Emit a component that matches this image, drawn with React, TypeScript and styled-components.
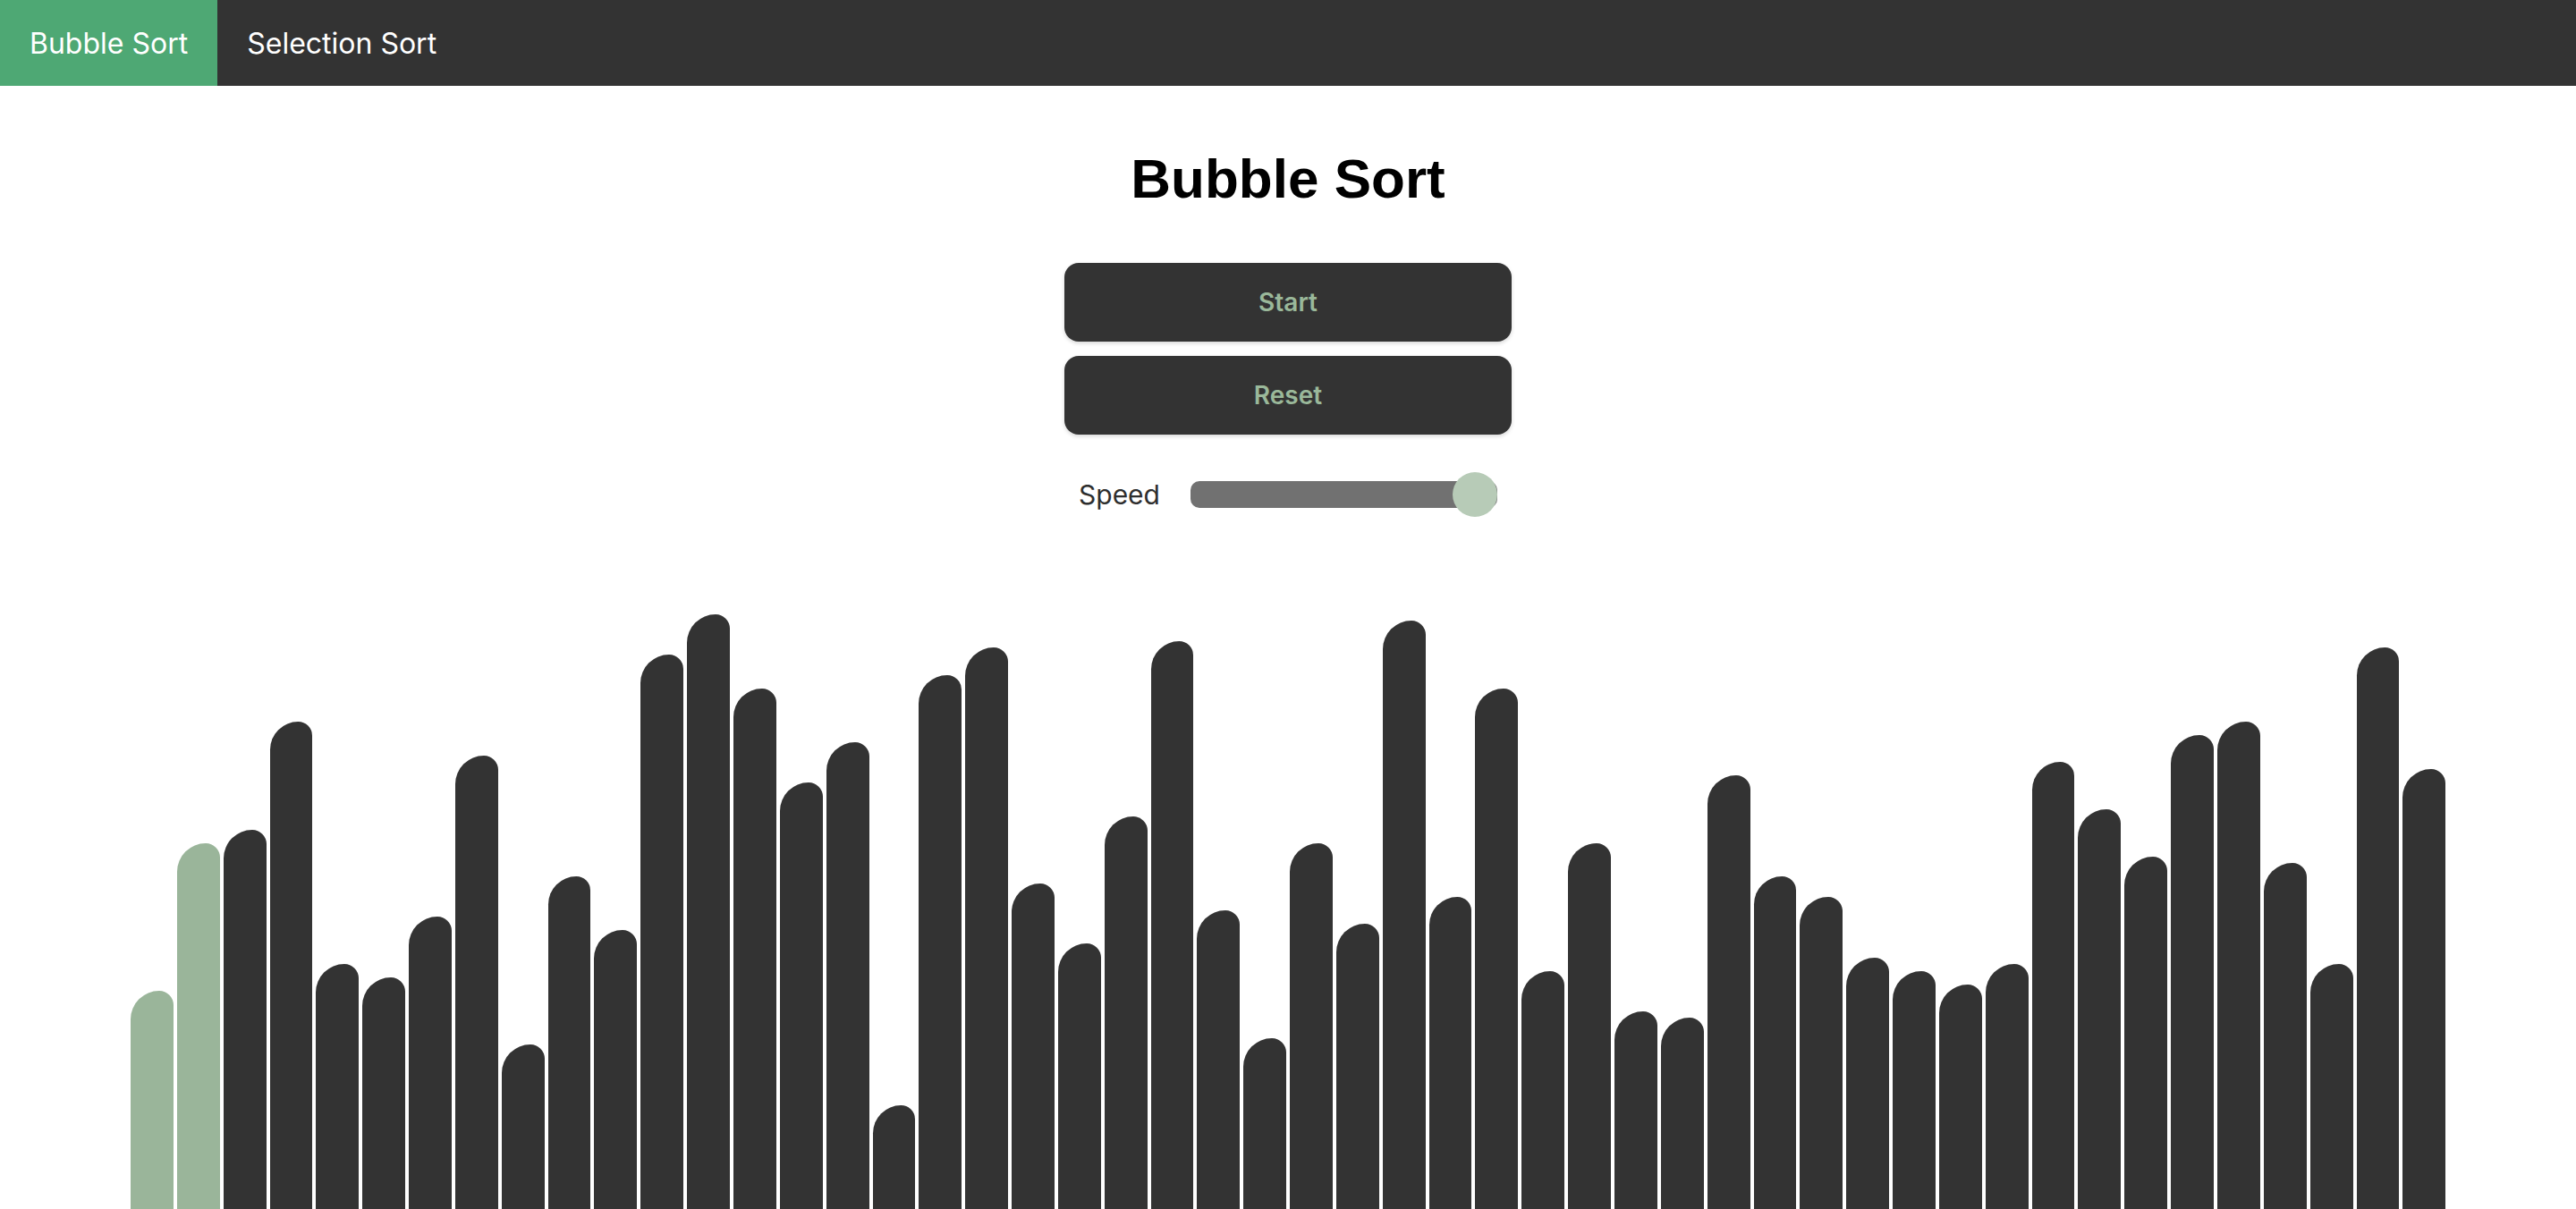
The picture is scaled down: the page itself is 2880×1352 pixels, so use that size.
import React from "react";
import styled, { createGlobalStyle } from "styled-components";

const GlobalStyle = createGlobalStyle`
  html, body {
    margin: 0;
    padding: 0;
    overflow: hidden;
    background: #ffffff;
    font-family: Inter, "Noto Sans", sans-serif;
  }
  * { box-sizing: border-box; }
`;

const Page = styled.div`
  height: 100vh;
  display: flex;
  flex-direction: column;
`;

const NavBar = styled.nav`
  height: 96px;
  flex: none;
  display: flex;
  align-items: stretch;
  background: #333333;
`;

const NavLink = styled.a<{ $active?: boolean }>`
  display: flex;
  align-items: center;
  padding: 0 33px 0 33px;
  font-family: Inter, sans-serif;
  font-size: 32px;
  font-weight: 400;
  color: #ffffff;
  text-decoration: none;
  background: ${(p) => (p.$active ? "#4ea874" : "transparent")};
  cursor: pointer;
`;

const Main = styled.main`
  flex: 1;
  min-height: 0;
  display: flex;
  flex-direction: column;
  align-items: center;
`;

const Title = styled.h1`
  margin: 73px 0 0;
  font-family: "Liberation Sans", Arial, sans-serif;
  font-size: 62px;
  line-height: 1;
  font-weight: 700;
  color: #000000;
`;

const Controls = styled.div`
  margin-top: 63px;
  display: flex;
  flex-direction: column;
  gap: 16px;
`;

const ActionButton = styled.button`
  width: 500px;
  height: 88px;
  border: none;
  border-radius: 16px;
  background: #333333;
  color: #9ab89a;
  font-family: Inter, sans-serif;
  font-size: 28px;
  font-weight: 600;
  box-shadow: 0 2px 4px rgba(0, 0, 0, 0.16);
  cursor: pointer;
`;

const SpeedRow = styled.div`
  margin-top: 42px;
  height: 50px;
  display: flex;
  align-items: center;
  gap: 34px;
`;

const SpeedLabel = styled.span`
  font-family: Inter, sans-serif;
  font-size: 30px;
  color: #2e2e2e;
`;

const Track = styled.div`
  position: relative;
  width: 343px;
  height: 30px;
  border-radius: 10px;
  background: #717171;
`;

const Thumb = styled.div`
  position: absolute;
  right: 0;
  top: 50%;
  width: 50px;
  height: 50px;
  margin-top: -25px;
  border-radius: 50%;
  background: #b7cbb7;
`;

const BarArea = styled.div`
  flex: 1;
  min-height: 0;
  width: 90%;
  display: flex;
  align-items: flex-end;
  overflow: hidden;
`;

const Bar = styled.div<{ $highlight?: boolean }>`
  flex: 1;
  margin: 0 2px;
  border-radius: 40px 20px 0 0;
  background: ${(p) => (p.$highlight ? "#9ab59a" : "#333333")};
`;

const heights = [
  244, 409, 424, 545, 274, 259, 327, 507, 184, 372, 312, 620, 665, 582, 477,
  522, 116, 597, 628, 364, 297, 439, 635, 334, 191, 409, 319, 658, 349, 582,
  266, 409, 221, 214, 485, 372, 349, 281, 266, 251, 274, 500, 447, 394, 530,
  545, 387, 274, 628, 492,
];

export default function App() {
  return (
    <Page>
      <GlobalStyle />
      <NavBar>
        <NavLink $active>Bubble Sort</NavLink>
        <NavLink>Selection Sort</NavLink>
      </NavBar>
      <Main>
        <Title>Bubble Sort</Title>
        <Controls>
          <ActionButton>Start</ActionButton>
          <ActionButton>Reset</ActionButton>
        </Controls>
        <SpeedRow>
          <SpeedLabel>Speed</SpeedLabel>
          <Track>
            <Thumb />
          </Track>
        </SpeedRow>
        <BarArea>
          {heights.map((h, i) => (
            <Bar key={i} $highlight={i < 2} style={{ height: `${h}px` }} />
          ))}
        </BarArea>
      </Main>
    </Page>
  );
}
